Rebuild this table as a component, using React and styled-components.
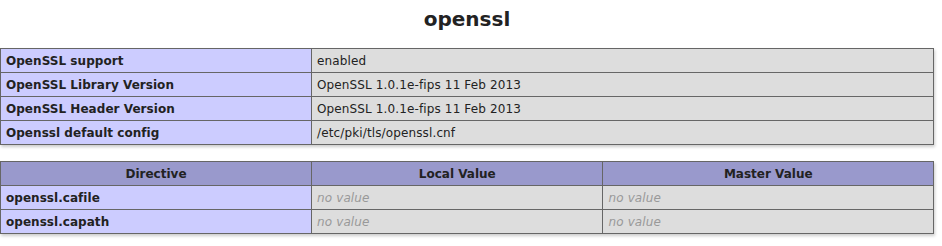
import React from "react"
import styled, { createGlobalStyle } from "styled-components"

const GlobalStyle = createGlobalStyle`
  body {
    margin: 0;
    background-color: #fff;
    color: #222;
    font-family: "DejaVu Sans", sans-serif;
  }
`

const Page = styled.div`
  width: 934px;
  padding-top: 7px;
`

const Title = styled.h2`
  margin: 0 0 17px;
  font-size: 20px;
  text-align: center;
`

const InfoTable = styled.table`
  border-collapse: collapse;
  border: 0;
  width: 934px;
  box-shadow: 1px 2px 3px #ccc;
  text-align: left;
  margin-bottom: 16px;
`

const Cell = styled.td`
  border: 1px solid #666;
  font-size: 12px;
  vertical-align: baseline;
  padding: 5px 5px 3px;
  height: 15px;
`

const KeyCell = styled(Cell)`
  background-color: #ccf;
  width: 300px;
  font-weight: bold;
  letter-spacing: 0.04px;
`

const ValueCell = styled(Cell)`
  background-color: #ddd;
  max-width: 300px;
  overflow-x: auto;
  word-wrap: break-word;
  letter-spacing: 0.13px;

  i {
    color: #999;
  }
`

const HeaderCell = styled(Cell).attrs({ as: "th" })`
  background-color: #99c;
  font-weight: bold;
  text-align: center;
  width: ${(p) => (p.$wide ? "300px" : "auto")};
`

const info = [
  ["OpenSSL support", "enabled"],
  ["OpenSSL Library Version", "OpenSSL 1.0.1e-fips 11 Feb 2013"],
  ["OpenSSL Header Version", "OpenSSL 1.0.1e-fips 11 Feb 2013"],
  ["Openssl default config", "/etc/pki/tls/openssl.cnf"],
]

const directives = ["openssl.cafile", "openssl.capath"]

const App = () => {
  return (
    <Page>
      <GlobalStyle />
      <Title>openssl</Title>
      <InfoTable>
        <tbody>
          {info.map(([key, value]) => (
            <tr key={key}>
              <KeyCell>{key}</KeyCell>
              <ValueCell>{value}</ValueCell>
            </tr>
          ))}
        </tbody>
      </InfoTable>
      <InfoTable>
        <tbody>
          <tr>
            <HeaderCell $wide>Directive</HeaderCell>
            <HeaderCell>Local Value</HeaderCell>
            <HeaderCell>Master Value</HeaderCell>
          </tr>
          {directives.map((name) => (
            <tr key={name}>
              <KeyCell>{name}</KeyCell>
              <ValueCell>
                <i>no value</i>
              </ValueCell>
              <ValueCell>
                <i>no value</i>
              </ValueCell>
            </tr>
          ))}
        </tbody>
      </InfoTable>
    </Page>
  )
}

export default App
